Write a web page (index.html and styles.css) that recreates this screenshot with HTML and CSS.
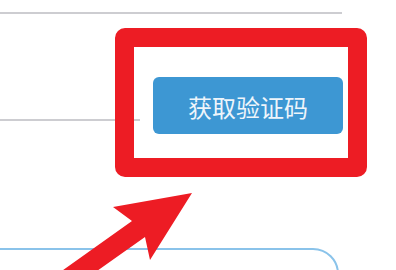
FILE: index.html
```html
<!DOCTYPE html>
<html lang="zh-CN">
<head>
<meta charset="utf-8">
<title>获取验证码</title>
<link rel="stylesheet" href="styles.css">
</head>
<body>
<div class="page">
  <div class="line-field"></div>
  <div class="code-row">
    <div class="code-input"></div>
    <button class="code-btn" type="button">获取验证码</button>
  </div>
  <div class="phone-box"></div>

  <div class="highlight"></div>
  <svg class="arrow" width="396" height="270" viewBox="0 0 396 270" aria-hidden="true">
    <polygon points="192,193 113,207 132,221 21,300 56,300 145,237 150,260" fill="#ed1c24"/>
  </svg>
</div>
</body>
</html>
```

FILE: styles.css
```css
html, body {
  margin: 0;
  padding: 0;
  background: #ffffff;
}

.page {
  position: relative;
  width: 396px;
  height: 270px;
  overflow: hidden;
  padding-top: 12px;
  box-sizing: border-box;
  font-family: "Noto Sans CJK SC", "Noto Sans", sans-serif;
}

.line-field {
  width: 342px;
  height: 0;
  border-bottom: 2px solid #cdcdd1;
}

.code-row {
  display: flex;
  align-items: flex-start;
  margin-top: 63px;
}

.code-input {
  width: 140px;
  height: 42px;
  margin-right: 13px;
  border-bottom: 2px solid #cdcdd1;
}

.code-btn {
  width: 190px;
  height: 57px;
  border: none;
  border-radius: 6px;
  background: #3d97d3;
  color: #eef5fb;
  font-family: "Noto Sans CJK SC", "Noto Sans", sans-serif;
  font-size: 24px;
  line-height: 1;
  padding: 0;
  padding-top: 2px;
}

.phone-box {
  margin-top: 114px;
  margin-left: -40px;
  width: 379px;
  height: 60px;
  box-sizing: border-box;
  border: 2px solid #8ac3ea;
  border-radius: 26px;
}

.highlight {
  position: absolute;
  left: 115px;
  top: 28px;
  width: 252px;
  height: 149px;
  box-sizing: border-box;
  border: 19px solid #ed1c24;
  border-radius: 10px;
}

.arrow {
  position: absolute;
  left: 0;
  top: 0;
}
```
